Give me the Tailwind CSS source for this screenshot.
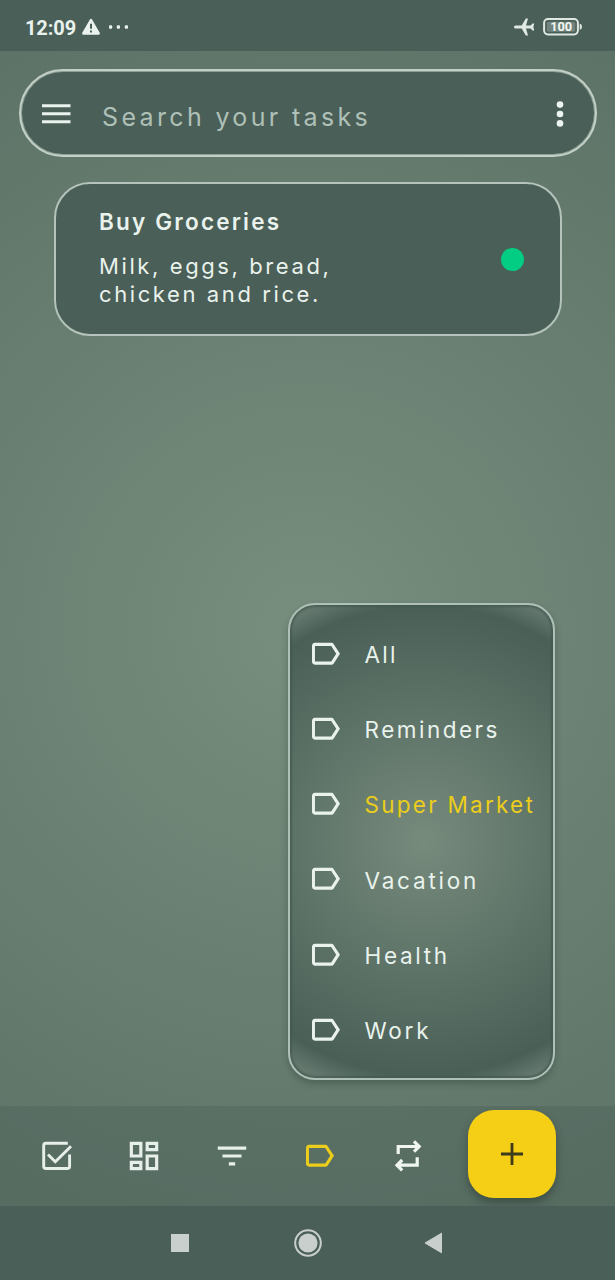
<!DOCTYPE html>
<html lang="en">
<head>
<meta charset="utf-8">
<title>Tasks</title>
<script src="https://cdn.jsdelivr.net/npm/@tailwindcss/browser@4"></script>
</head>
<body class="w-[615px] h-[1280px] overflow-hidden bg-[#4a5f57] font-[Inter,sans-serif] text-[#e9f2ec]">
<svg class="hidden"><symbol id="tag" viewBox="0 0 24 24"><path d="M17.1 5.84C16.75 5.33 16.2 5 15.5 5L5 5.01C3.9 5.01 3.2 5.9 3.2 7v10c0 1.1.8 1.99 1.8 1.99L15.5 19c.67 0 1.27-.33 1.6-.84L21.1 12l-4-6.16zM15.5 17H5.1V7h10.4l3.2 5L15.5 17z" fill="currentColor"/></symbol></svg>
<div class="flex flex-col h-full">
  <header class="h-[51px] flex items-center pl-[25px] pr-[32px] pt-[4px] shrink-0">
    <span class="font-[Roboto,sans-serif] font-bold text-[20px] leading-none tracking-[-0.1px]">12:09</span>
    <svg class="ml-[5px] -mt-[2px]" width="20" height="18" viewBox="0 0 20 18"><path d="M10 2.2 17.6 15.4H2.4Z" fill="#e9f2ec" stroke="#e9f2ec" stroke-width="2.6" stroke-linejoin="round"/><path d="M10 5.8v5M10 12.4v2.2" stroke="#4a5f57" stroke-width="2"/></svg>
    <svg class="ml-[7px] -mt-[2px]" width="22" height="4" viewBox="0 0 22 4" fill="#e9f2ec"><rect x="1" y=".3" width="3.2" height="3.4" rx="1"/><rect x="8.8" y=".3" width="3.2" height="3.4" rx="1"/><rect x="16.8" y=".3" width="3.2" height="3.4" rx="1"/></svg>
    <svg class="ml-auto -mt-[2px]" width="21" height="18" viewBox="0 0 21 18"><path d="M1.6 7.5H7.7L11.8.5H14L12 7.5H16.6L18.5 5.5H20.2L19.4 9 20.2 12.5H18.5L16.6 10.5H12L14 17.5H11.8L7.7 10.5H1.6Q0 10.5 0 9T1.6 7.5Z" fill="#e0e9e4"/></svg>
    <svg class="ml-[8px] -mt-[2px]" width="40" height="18" viewBox="0 0 40 18"><rect x="1.1" y="1.1" width="33.8" height="15.3" rx="3.8" fill="none" stroke="#dfe8e3" stroke-width="2"/><rect x="3.8" y="3.8" width="28.5" height="10" rx="1.5" fill="#71837c"/><path d="M36.7 5.8Q39 6 39 8.8T36.7 11.8Z" fill="#dfe8e3"/><text x="18.2" y="13.4" text-anchor="middle" font-family="Roboto" font-weight="700" font-size="12.8" fill="#f1f7f3">100</text></svg>
  </header>

  <main class="h-[1155px] shrink-0 flex flex-col bg-[radial-gradient(circle_1120px_at_307px_577px,#778d7d_0%,#4a6057_100%)]">
    <div class="mt-[18px] ml-[19px] w-[578px] h-[88px] rounded-full border-2 border-[#c3d0c8] p-px bg-[#8ea096] shrink-0 flex">
      <div class="flex-1 flex items-center rounded-full bg-[#4a5f57] pl-[19px] pr-[30px]">
        <svg class="mt-px" width="30" height="20" viewBox="0 0 30 20" stroke="#e9f2ec" stroke-width="2.9"><path d="M1 1.8h28.5M1 9.8h28.5M1 17.8h28.5"/></svg>
        <span class="ml-[31px] mt-[7px] text-[25px] leading-8 tracking-[3.35px] text-[#afc0b7] whitespace-nowrap">Search your tasks</span>
        <svg class="ml-auto mt-px" width="8" height="28" viewBox="0 0 8 28" fill="#edf5f0"><circle cx="4" cy="4.6" r="3.3"/><circle cx="4" cy="14" r="3.3"/><circle cx="4" cy="23.4" r="3.3"/></svg>
      </div>
    </div>

    <article class="mt-[25px] ml-[54px] w-[508px] h-[154px] rounded-[36px] border-2 border-[#b4c3bb] bg-[#4a5f57] flex items-center justify-between pl-[43px] pr-[36px] shrink-0">
      <div class="mt-[-2px]">
        <h1 class="text-[22.5px] font-semibold leading-7 tracking-[2.2px] whitespace-nowrap">Buy Groceries</h1>
        <p class="mt-[16px] text-[22px] leading-7 tracking-[2.6px] whitespace-nowrap">Milk, eggs, bread,<br>chicken and rice.</p>
      </div>
      <span class="size-[23px] rounded-full bg-[#02cd82]"></span>
    </article>

    <nav class="mt-[267px] ml-[288px] w-[267px] h-[477px] rounded-[27px] border-2 border-[#afc0b8] shrink-0 shadow-[0_4px_6px_rgba(40,60,50,0.35),inset_0_0_2px_2px_rgba(65,88,78,0.7)] bg-[radial-gradient(circle_at_134px_236px,#768b7c_0px,#4a6057_235px,#64786e_258px)] flex flex-col pt-[11px] pl-[17px]">
      <div class="h-[75.2px] flex items-center"><svg class="size-[37.5px]"><use href="#tag"/></svg><span class="ml-[20px] mt-[2px] text-[22.5px] leading-7 tracking-[2.3px] whitespace-nowrap">All</span></div>
      <div class="h-[75.2px] flex items-center"><svg class="size-[37.5px]"><use href="#tag"/></svg><span class="ml-[20px] mt-[2px] text-[22.5px] leading-7 tracking-[2.5px] whitespace-nowrap">Reminders</span></div>
      <div class="h-[75.2px] flex items-center"><svg class="size-[37.5px]"><use href="#tag"/></svg><span class="ml-[20px] mt-[2px] text-[22.5px] leading-7 tracking-[2.25px] whitespace-nowrap text-[#eccd1b]">Super Market</span></div>
      <div class="h-[75.2px] flex items-center"><svg class="size-[37.5px]"><use href="#tag"/></svg><span class="ml-[20px] mt-[3px] text-[22.5px] leading-7 tracking-[2.8px] whitespace-nowrap">Vacation</span></div>
      <div class="h-[75.2px] flex items-center"><svg class="size-[37.5px]"><use href="#tag"/></svg><span class="ml-[20px] mt-[3px] text-[22.5px] leading-7 tracking-[2.7px] whitespace-nowrap">Health</span></div>
      <div class="h-[75.2px] flex items-center"><svg class="size-[37.5px]"><use href="#tag"/></svg><span class="ml-[20px] mt-[2px] text-[22.5px] leading-7 tracking-[2.8px] whitespace-nowrap">Work</span></div>
    </nav>

    <div class="mt-auto h-[100px] shrink-0 bg-[#4a5f57]/35 flex items-center pl-[38px] overflow-hidden">
      <svg width="38" height="38" viewBox="0 0 38 38" fill="none" stroke="#e6efe9" stroke-width="2.9"><path d="M29.8 6.2H8Q5.7 6.2 5.7 8.5V29.2Q5.7 31.5 8 31.5H29.3Q31.6 31.5 31.6 29.2V17.5"/><path d="M10 17.5 17.3 24.8 33 9.2"/></svg>
      <svg class="ml-[49px]" width="38" height="38" viewBox="0 0 24 24" fill="#e6efe9"><path d="M19 5v2h-4V5h4M9 5v6H5V5h4m10 8v6h-4v-6h4M9 17v2H5v-2h4M21 3h-8v6h8V3zM11 3H3v10h8V3zm10 8h-8v10h8V11zm-10 4H3v6h8v-6z"/></svg>
      <svg class="ml-[50px]" width="38" height="38" viewBox="0 0 24 24" fill="#e6efe9"><path d="M10 18h4v-2h-4v2zM3 6v2h18V6H3zm3 7h12v-2H6v2z"/></svg>
      <svg class="ml-[50px] size-[37.5px] text-[#eccd1b]"><use href="#tag"/></svg>
      <svg class="ml-[50px]" width="38" height="38" viewBox="0 0 38 38" fill="none" stroke="#eff6f1" stroke-width="3.2"><path d="M9.2 17V9.5H30M25 4.3 30.2 9.5 25 14.7"/><path d="M28.2 20.3V28.2H8M13.2 23 8 28.2 13.2 33.4"/></svg>
      <button class="ml-[41.5px] mb-[5px] size-[88px] rounded-[26px] bg-[#f4cf15] shadow-[0_5px_9px_rgba(30,45,38,0.45)] flex items-center justify-center"><svg width="24" height="24" viewBox="0 0 24 24" stroke="#3d3b1c" stroke-width="2.8"><path d="M12 1v22M1 12h22"/></svg></button>
    </div>
  </main>

  <footer class="h-[74px] flex items-center pl-[171px]">
    <span class="size-[18px] bg-[#c8cfcc]"></span>
    <svg class="ml-[105px]" width="28" height="28" viewBox="0 0 28 28"><circle cx="14" cy="14" r="12.8" fill="none" stroke="#c8cfcc" stroke-width="2"/><circle cx="14" cy="14" r="9.6" fill="#c8cfcc"/></svg>
    <svg class="ml-[102px]" width="19" height="22" viewBox="0 0 19 22"><path d="M1 11 17.5 1.2V20.8Z" fill="#c8cfcc" stroke="#c8cfcc" stroke-linejoin="round"/></svg>
  </footer>
</div>
</body>
</html>
